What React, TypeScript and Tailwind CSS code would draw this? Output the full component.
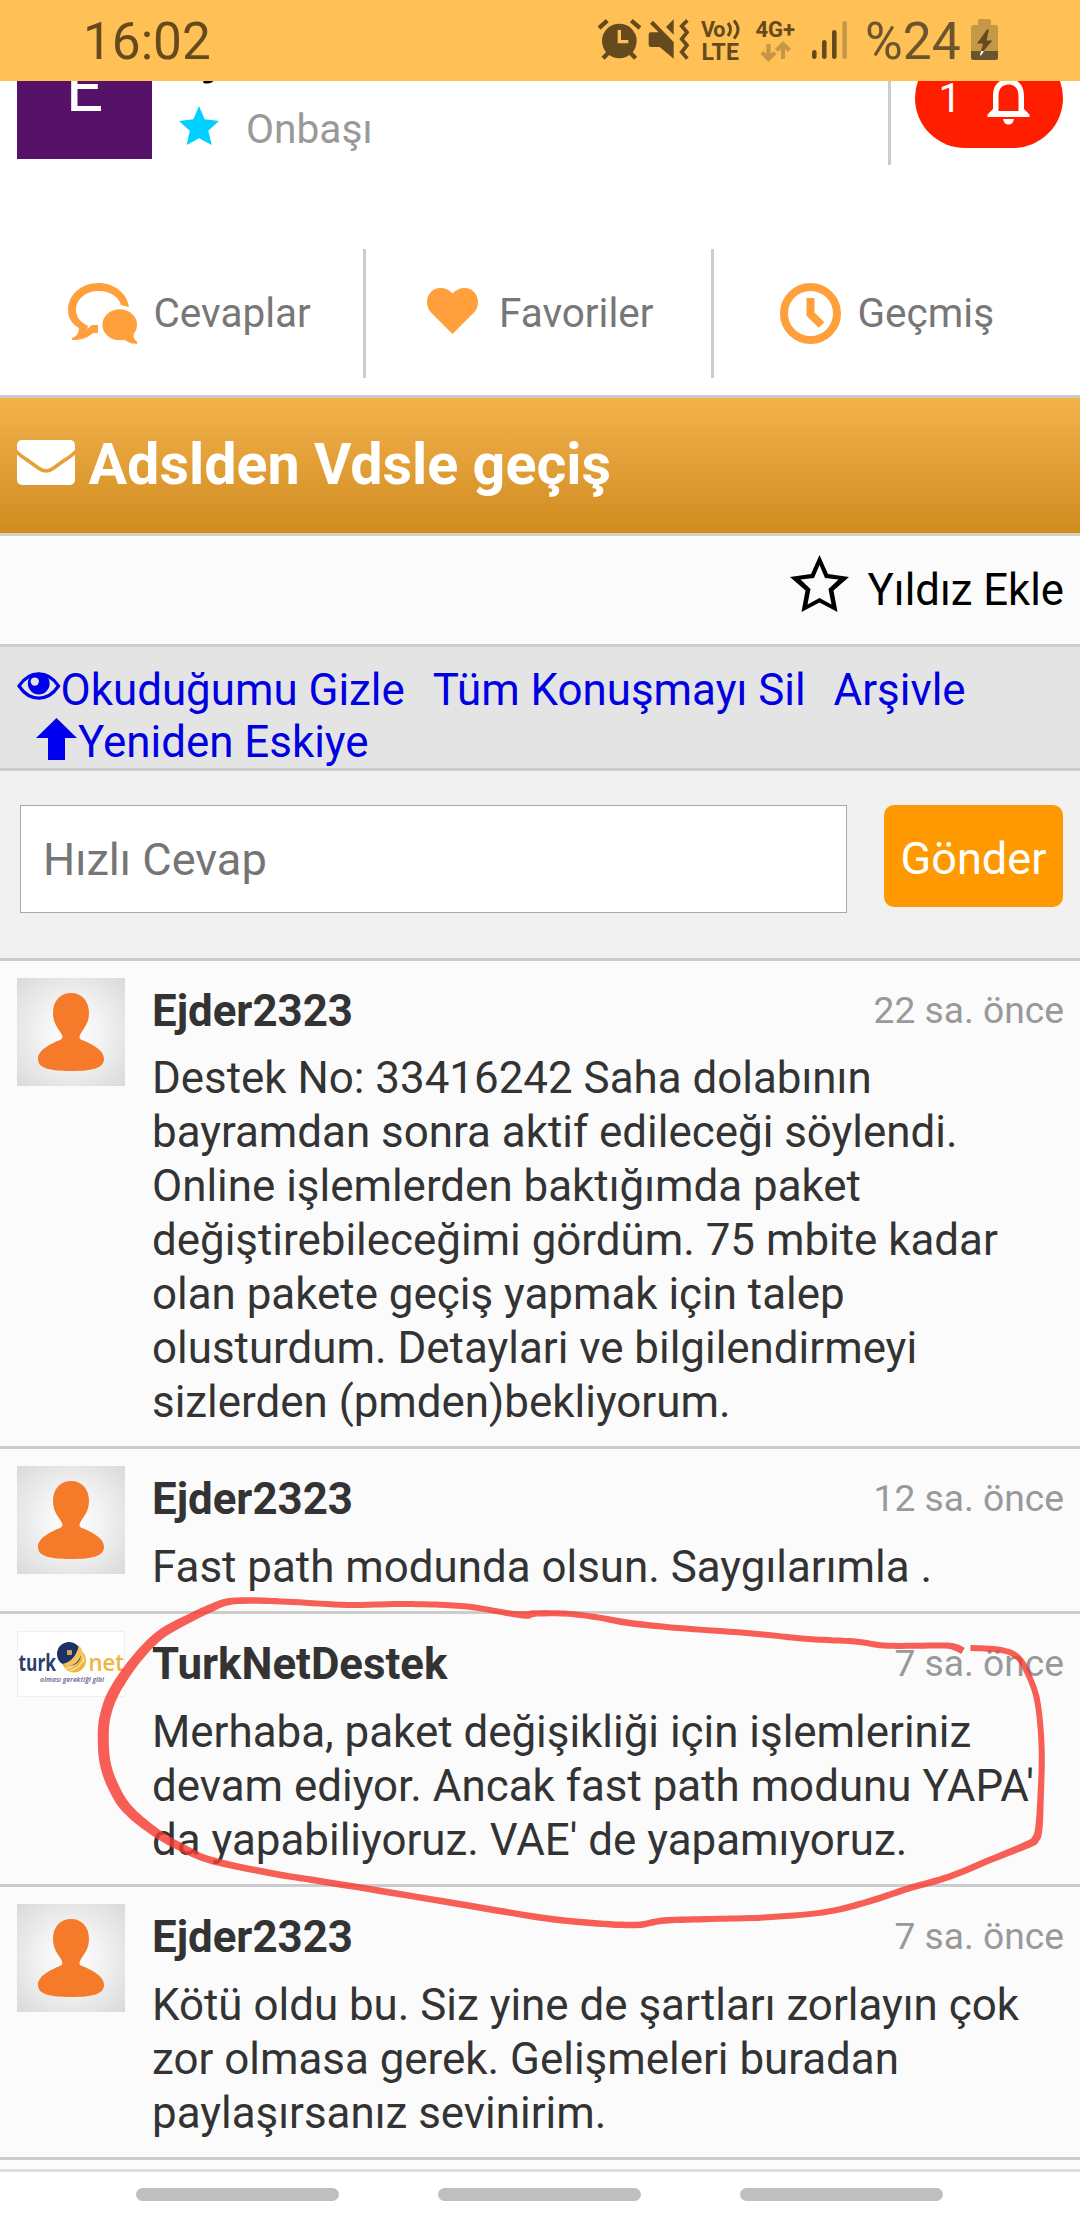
import React from "react";

type Message = {
  author: string;
  time: string;
  avatar: "person" | "turknet";
  lines: string[];
};

const messages: Message[] = [
  {
    author: "Ejder2323",
    time: "22 sa. önce",
    avatar: "person",
    lines: [
      "Destek No: 33416242 Saha dolabının",
      "bayramdan sonra aktif edileceği söylendi.",
      "Online işlemlerden baktığımda paket",
      "değiştirebileceğimi gördüm. 75 mbite kadar",
      "olan pakete geçiş yapmak için talep",
      "olusturdum. Detaylari ve bilgilendirmeyi",
      "sizlerden (pmden)bekliyorum.",
    ],
  },
  {
    author: "Ejder2323",
    time: "12 sa. önce",
    avatar: "person",
    lines: ["Fast path modunda olsun. Saygılarımla ."],
  },
  {
    author: "TurkNetDestek",
    time: "7 sa. önce",
    avatar: "turknet",
    lines: [
      "Merhaba, paket değişikliği için işlemleriniz",
      "devam ediyor. Ancak fast path modunu YAPA'",
      "da yapabiliyoruz. VAE' de yapamıyoruz.",
    ],
  },
  {
    author: "Ejder2323",
    time: "7 sa. önce",
    avatar: "person",
    lines: [
      "Kötü oldu bu. Siz yine de şartları zorlayın çok",
      "zor olmasa gerek. Gelişmeleri buradan",
      "paylaşırsanız sevinirim.",
    ],
  },
];

function StatusBar() {
  return (
    <div className="flex h-[81px] bg-[#ffc055] text-[#654a1e]">
      <span className="ml-[83px] w-[515px] pt-[2px] text-[51.3px] leading-[79px]">16:02</span>
      {/* alarm clock */}
      <svg className="mt-[19px] h-[42px] w-[43px] shrink-0" viewBox="20 27 129 126">
        <circle cx="84" cy="93" r="52" fill="#654a1e" />
        <path d="M23 54 L48 32 M120 32 L146 54 M35 145 L50 130 M133 145 L118 130" stroke="#654a1e" strokeWidth="13" />
        <path d="M84 60 V95 H111" fill="none" stroke="#ffc055" strokeWidth="10" />
      </svg>
      {/* muted speaker with vibration */}
      <svg className="ml-[7px] mt-[19px] h-[42px] w-[41px] shrink-0" viewBox="173 27 123 126">
        <path
          d="M179 41 L188 32 L250 96 V146 L208 111 H181 Q175 111 175 104 V74 Q175 67 181 67 H205 Z M227 51 L250 28 V74 Z"
          fill="#654a1e"
        />
        <path d="M291 31 L274 48 L290 67 L274 87 L290 106 L274 126 L291 146" fill="none" stroke="#654a1e" strokeWidth="11" />
      </svg>
      <svg className="ml-[11px] mt-[19px] h-[42px] w-[42px] shrink-0 overflow-visible" viewBox="0 0 42 42" fill="#654a1e">
        <text x="1" y="17.8" fontFamily="Roboto" fontWeight="700" fontSize="21.5" textLength="24.5">Vo</text>
        <text x="1.5" y="40.5" fontFamily="Roboto" fontWeight="700" fontSize="23" textLength="37.5">LTE</text>
        <path d="M28 4 Q33 10.5 28 17 M34 1.5 Q42 10.5 34 19.5" fill="none" stroke="#654a1e" strokeWidth="3" />
      </svg>
      <svg className="ml-[12px] mt-[19px] h-[44px] w-[42px] shrink-0 overflow-visible" viewBox="0 0 42 44">
        <text x="1.5" y="17.8" fontFamily="Roboto" fontWeight="700" fontSize="22" textLength="39.5" fill="#654a1e">4G+</text>
        <path d="M14.5 25 V39 M8 33.5 L14.5 40 L21 33.5 M29 40 V26 M22.5 31.5 L29 25 L35.5 31.5" fill="none" stroke="#c59747" strokeWidth="4.2" />
      </svg>
      <svg className="ml-[15px] mt-[20px] h-[40px] w-[37px] shrink-0" viewBox="0 0 37 40" fill="#654a1e">
        <rect x="1" y="30" width="4.6" height="9" rx="2.3" />
        <rect x="11" y="20" width="4.6" height="19" rx="2.3" />
        <rect x="21" y="10" width="4.6" height="29" rx="2.3" />
        <rect x="31.3" y="1" width="4.6" height="38" rx="2.3" fill="#c59747" />
      </svg>
      <span className="ml-[17px] pt-[2px] text-[51.5px] leading-[79px] text-[#6b552f]">%24</span>
      <svg className="ml-[10.5px] mt-[19px] h-[41px] w-[27px] shrink-0" viewBox="0 0 27 41">
        <path d="M7 6 V2 Q7 0 9 0 H18 Q20 0 20 2 V6 H24.5 Q27 6 27 8.5 V32 H0 V8.5 Q0 6 2.5 6 Z" fill="#c59747" />
        <path d="M0 32 H27 V38.5 Q27 41 24.5 41 H2.5 Q0 41 0 38.5 Z" fill="#6b552f" />
        <path d="M16 10.5 L6 24.5 H12 L9 36 L21.5 21.5 H15.5 L18 10.5 Z" fill="#654a1e" />
        <path d="M10.3 32 H13 L10 36.5 L8.8 36 Z" fill="#fff" />
      </svg>
    </div>
  );
}

function ProfileHeader() {
  return (
    <div className="flex h-[168px] overflow-hidden bg-white pl-[17px]">
      <div className="mt-[-57px] h-[135px] w-[135px] bg-[#561269] text-center text-[66px] leading-[130px] text-white">E</div>
      <div className="ml-[26.5px] mt-[-54.5px] w-[709.5px]">
        <div className="text-[48.6px] font-bold leading-[60px] text-black">Ejder2323</div>
        <div className="mt-[18.5px] flex">
          <svg className="mt-px h-[39px] w-[40px]" viewBox="0 0 39 38">
            <path d="M19.5 0 L25 13 L39 14.5 L28.5 24 L32 38 L19.5 31.5 L7.5 38 L10.5 24 L0 14.5 L14 13 Z" fill="#00cfff" />
          </svg>
          <span className="ml-[27.5px] text-[40.7px] leading-[48px] text-[#999]">Onbaşı</span>
        </div>
      </div>
      <div className="h-[84px] w-[3px] bg-[#ccc]" />
      <div className="ml-[24px] mt-[-33px] flex h-[100px] w-[148px] items-center rounded-full bg-[#ff1e00] pl-[23.5px] text-white">
        <span className="text-[40.5px] leading-[48px]">1</span>
        <svg className="ml-[26px] mt-[7px] h-[46px] w-[43px]" viewBox="988 79 43 46" fill="#fff">
          <path
            fillRule="evenodd"
            d="M994 96 C994 85 1000 79 1009.5 79 C1019 79 1025 85 1025 96 V109 L1030.5 114.5 V117 H988.5 V114.5 L994 109 Z M999.5 111 H1019.5 V96 C1019.5 88 1015 84.5 1009.5 84.5 C1004 84.5 999.5 88 999.5 96 Z"
          />
          <path d="M1004 119 H1015 Q1014 124.5 1009.5 124.5 Q1005 124.5 1004 119 Z" />
        </svg>
      </div>
    </div>
  );
}

function Tabs() {
  return (
    <div className="h-[149px] border-b-[3px] border-[#ccc] bg-white">
      <div className="flex h-[129px] text-[40.5px] text-[#777]">
        <div className="flex w-[366px] items-center border-r-[3px] border-[#ccc] pl-[68px]">
          <svg className="h-[61px] w-[69px]" viewBox="0 0 69 61" fill="#ffa03c">
            <path d="M61 24 C59 10 46 0 30.5 0 C13 0 0 12 0 27 C0 35 4 41 11 45 C11 50 8 54 4 55 L4 57 C12 57.5 20 55 25 50 L30 50 L30 42 L24 42 L19 46 L20 43 C14 40 8 35 8 27 C8 16 18 8 30.5 8 C42 8 51 14 53 22 Z" />
            <ellipse cx="51.7" cy="41.7" rx="17.3" ry="15.5" />
            <path d="M66 48 C65 54 66 57 69 58.5 L69 60.8 C63 61 59 59 56 56 Z" />
          </svg>
          <span className="ml-[16.5px]">Cevaplar</span>
        </div>
        <div className="flex w-[348px] items-center border-r-[3px] border-[#ccc] pl-[61px]">
          <svg className="mb-[5px] h-[46px] w-[51px]" viewBox="0 0 51 46">
            <path d="M25.5 46 L4.5 25 C1.5 22 0 18.5 0 14 C0 6 6 0 13.5 0 C18.5 0 22.5 2 25.5 5.5 C28.5 2 32.5 0 37.5 0 C45 0 51 6 51 14 C51 18.5 49.5 22 46.5 25 Z" fill="#ffa03c" />
          </svg>
          <span className="ml-[21px]">Favoriler</span>
        </div>
        <div className="flex items-center pl-[66px]">
          <svg className="h-[61px] w-[61px]" viewBox="0 0 61 61" fill="none" stroke="#ffa03c" strokeWidth="8">
            <circle cx="30.5" cy="30.5" r="26.5" />
            <path d="M30.5 15 V31 L41.5 42" />
          </svg>
          <span className="ml-[16.5px]">Geçmiş</span>
        </div>
      </div>
    </div>
  );
}

function TitleBar() {
  return (
    <div className="flex h-[138px] items-center border-b-[3px] border-[#d3d0c4] bg-gradient-to-b from-[#f4b24b] to-[#cf8b1c] bg-origin-border pl-[17px] text-white">
      <svg className="mt-[-6px] h-[45px] w-[58px]" viewBox="0 0 58 45">
        <rect width="58" height="45" rx="5" fill="#fff" />
        <path d="M-1 11 C2 15 7 18 11 20.5 L22 28.5 Q29 33.5 36 28.5 L47 20.5 C51 18 56 15 59 11" fill="none" stroke="#e3a237" strokeWidth="3.6" />
      </svg>
      <span className="ml-[13.5px] text-[57.45px] font-bold">Adslden Vdsle geçiş</span>
    </div>
  );
}

function StarRow() {
  return (
    <div className="flex h-[111px] items-center justify-end border-b-[3px] border-[#ccc] bg-[#fbfbfb] pr-[16px] text-black">
      <svg className="mb-[13px] h-[57px] w-[59px]" viewBox="0 0 59 57">
        <path
          fillRule="evenodd"
          d="M29.5 0 L38 19 L59 22 L43.5 35.5 L47.5 57 L29.5 47.5 L11.5 57 L15.5 35.5 L0 22 L21 19 Z M29.5 10 L35 23 L48.5 24.6 L38.5 34 L41.5 49.5 L29.5 43 L17.5 49.5 L20.5 34 L10.5 24.6 L24 23 Z"
        />
      </svg>
      <span className="ml-[19px] pt-[2px] text-[43.7px]">Yıldız Ekle</span>
    </div>
  );
}

function ActionLinks() {
  return (
    <div className="h-[124px] border-b-[3px] border-[#ccc] bg-[#e4e4e4] pl-[17px] pt-[17px] text-[43.9px] leading-[52px] text-[#0000e2]">
      <div className="flex gap-[28px]">
        <a className="flex">
          <svg className="mt-[8px] h-[28px] w-[43.5px]" viewBox="0 0 44 28">
            <path d="M2 14 C8 5 14 1.8 22 1.8 C30 1.8 36 5 42 14 C36 23 30 26.2 22 26.2 C14 26.2 8 23 2 14 Z" fill="none" stroke="#0000ee" strokeWidth="3.2" />
            <circle cx="22" cy="11.5" r="11" fill="#0000ee" />
            <circle cx="18" cy="9.5" r="4.2" fill="#e4e4e4" />
          </svg>
          <span>Okuduğumu Gizle</span>
        </a>
        <a>Tüm Konuşmayı Sil</a>
        <a>Arşivle</a>
      </div>
      <a className="flex pl-[19px]">
        <svg className="mt-[2px] h-[42px] w-[41px]" viewBox="0 0 41 42">
          <path d="M20.5 0 L41 20 H29 V42 H12 V20 H0 Z" fill="#0000ee" />
        </svg>
        <span className="ml-[1px]">Yeniden Eskiye</span>
      </a>
    </div>
  );
}

function QuickReply() {
  return (
    <div className="flex h-[190px] border-b-[3px] border-[#ccc] bg-[#f1f1f1] pl-[20px] pt-[34px]">
      <div className="h-[108px] w-[827px] border border-[#a9a9a9] bg-white pl-[22px] text-[45.2px] leading-[107px] text-[#757575]">
        Hızlı Cevap
      </div>
      <button className="ml-[37px] h-[102px] w-[179px] rounded-[10px] bg-[#ff9900] pt-[5px] text-center text-[45.1px] leading-[98px] text-white">
        Gönder
      </button>
    </div>
  );
}

function PersonAvatar() {
  return (
    <div className="h-[108px] w-[108px] shrink-0 bg-[radial-gradient(circle_at_center,#fff_0%,#f3f3f3_40%,#d9d9d9_100%)]">
      <svg className="h-[108px] w-[108px]" viewBox="0 0 108 108">
        <path
          d="M54 15 C43 15 36 23 36 35 C36 46 42 51 45 57 C46 60 45 61 43 62 C33 66 21 72 21 81 C21 90 32 93 54 93 C76 93 87 90 87 81 C87 72 75 66 65 62 C62.5 61 62 60 63 57 C66 51 72 46 72 35 C72 23 65 15 54 15 Z"
          fill="#f57b2b"
        />
      </svg>
    </div>
  );
}

function TurkNetAvatar() {
  return (
    <div className="h-[66px] w-[108px] shrink-0 border border-[#efefef] bg-white">
      <svg className="h-[64px] w-[106px] overflow-visible" viewBox="1 1 106 64">
        <circle cx="57" cy="29.5" r="12" fill="#efb73a" />
        <path d="M47 37 Q58 39 63 24 M52 40 Q64 37 67 27 M60 20 Q66 22 67 31" fill="none" stroke="#fbe3ae" strokeWidth="1.2" />
        <circle cx="52" cy="23" r="12" fill="#1e3068" />
        <path d="M45 33 Q58 31 62 14 L65 19 Q64 32 51 36 Z" fill="#f3c55a" />
        <rect x="50" y="19" width="5" height="5" rx="1" fill="#c6a75c" />
        <text x="1.5" y="39.5" fontFamily="Open Sans" fontWeight="700" fontSize="23" textLength="37.5" lengthAdjust="spacingAndGlyphs" fill="#2b3c6e">turk</text>
        <text x="71.500" y="39.5" fontFamily="Open Sans" fontWeight="600" fontSize="24" textLength="35.5" lengthAdjust="spacingAndGlyphs" fill="#eeb541">net</text>
        <text x="23" y="51" fontFamily="Open Sans" fontStyle="italic" fontWeight="700" fontSize="7.5" textLength="64" lengthAdjust="spacingAndGlyphs" fill="#77799f">olması gerektiği gibi</text>
      </svg>
    </div>
  );
}

function MessageItem({ message }: { message: Message }) {
  return (
    <div className="group flex border-b-[3px] border-[#ccc] bg-[#fbfbfb] pb-[17px] pl-[17px] pr-[16px] pt-[17px]">
      {message.avatar === "person" ? <PersonAvatar /> : <TurkNetAvatar />}
      <div className="ml-[27px] grow">
        <div className="flex justify-between">
          <span className="text-[43.8px] font-bold leading-[66px] text-[#333]">{message.author}</span>
          <span className="text-[37.2px] leading-[64px] text-[#999]">{message.time}</span>
        </div>
        <div className="mt-[8px] whitespace-nowrap text-[43.9px] leading-[54px] text-[#333] group-first:mt-[7px]">
          {message.lines.map((line) => (
            <div key={line}>{line}</div>
          ))}
        </div>
      </div>
    </div>
  );
}

// Hand-drawn marker line: x, y and pen width at each point.
const marker: [number, number, number][] = [
  [963, 1651, 7], [956, 1647.5, 7], [946, 1645.5, 6], [920, 1645.7, 6], [884, 1645.5, 6], [855, 1641.5, 6],
  [808.6, 1639, 6], [746.6, 1633, 6], [678, 1628, 6], [629.5, 1623, 6.5], [595, 1617, 6], [565, 1613.6, 6],
  [535, 1613.5, 6.5], [527, 1615, 7.5], [510, 1613.5, 6], [475, 1607.5, 6], [445, 1605, 6], [399.5, 1604, 6],
  [348, 1605, 6], [292.7, 1602, 6], [251, 1600.5, 6.5], [227, 1602, 7], [210, 1608.5, 8], [193, 1616.5, 8.5],
  [160, 1635, 9.5], [134, 1662, 10], [114, 1692, 11], [105.5, 1715, 11], [103.3, 1735, 11], [105, 1762, 11],
  [113, 1786, 11], [127.4, 1809, 10.5], [155, 1832, 9], [182.5, 1848, 8], [213.5, 1861, 7], [275.5, 1874, 6.5],
  [310, 1879.5, 6.5], [375, 1890, 6.5], [465, 1905, 6.5], [540, 1917.5, 6.5], [591.6, 1923, 6.5], [636.4, 1925, 6.5],
  [664, 1920.5, 6.5], [712, 1919, 6], [764, 1917.5, 6], [822.4, 1912.5, 6], [863.7, 1903, 6.5], [908.5, 1888.5, 6.5],
  [949.8, 1876.5, 6.5], [991, 1859.5, 6.5], [1029, 1844, 7.5], [1035.5, 1839, 8], [1038.6, 1830, 7.5], [1040.5, 1800, 6.5],
  [1041.7, 1750, 6], [1038, 1705, 6], [1030.7, 1680, 6], [1018.6, 1658, 6], [1001, 1650, 6], [970.4, 1648, 6],
];

function markerOutline() {
  const at = (i: number) => marker[Math.max(0, Math.min(marker.length - 1, i))];
  const spline = (a: number, b: number, c: number, d: number, t: number) =>
    0.5 * (2 * b + (c - a) * t + (2 * a - 5 * b + 4 * c - d) * t * t + (3 * b - a - 3 * c + d) * t * t * t);
  const samples: number[][] = [];
  for (let i = 0; i < marker.length - 1; i++) {
    for (let s = 0; s < 8; s++) {
      const t = s / 8;
      samples.push([0, 1, 2].map((k) => spline(at(i - 1)[k], at(i)[k], at(i + 1)[k], at(i + 2)[k], t)));
    }
  }
  samples.push(at(marker.length - 1));
  const left: string[] = [];
  const right: string[] = [];
  samples.forEach(([x, y, w], i) => {
    const p = samples[Math.max(0, i - 1)];
    const n = samples[Math.min(samples.length - 1, i + 1)];
    const dx = n[0] - p[0];
    const dy = n[1] - p[1];
    const len = Math.hypot(dx, dy) || 1;
    const ox = (-dy / len) * (w / 2);
    const oy = (dx / len) * (w / 2);
    left.push(`${(x + ox).toFixed(1)} ${(y + oy).toFixed(1)}`);
    right.unshift(`${(x - ox).toFixed(1)} ${(y - oy).toFixed(1)}`);
  });
  return `M${left.concat(right).join(" L")} Z`;
}

function MarkerCircle() {
  return (
    <svg className="pointer-events-none absolute left-0 top-[1580px] h-[360px] w-[1080px]" viewBox="0 1580 1080 360">
      <path d={markerOutline()} fill="#f53b30" fillOpacity="0.82" />
    </svg>
  );
}

export default function App() {
  return (
    <div className="relative h-[2220px] w-[1080px] overflow-hidden bg-white font-[Roboto,sans-serif]">
      <StatusBar />
      <ProfileHeader />
      <Tabs />
      <TitleBar />
      <StarRow />
      <ActionLinks />
      <QuickReply />
      <div>
        {messages.map((message, i) => (
          <MessageItem key={i} message={message} />
        ))}
      </div>
      <div className="h-[12px] border-b-[3px] border-[#dedede] bg-[#fbfbfb]" />
      <div className="flex gap-[99px] pl-[136px] pt-[16px]">
        <div className="h-[13px] w-[203px] rounded-full bg-[#bfbfbf]" />
        <div className="h-[13px] w-[203px] rounded-full bg-[#bfbfbf]" />
        <div className="h-[13px] w-[203px] rounded-full bg-[#bfbfbf]" />
      </div>
      <MarkerCircle />
    </div>
  );
}
